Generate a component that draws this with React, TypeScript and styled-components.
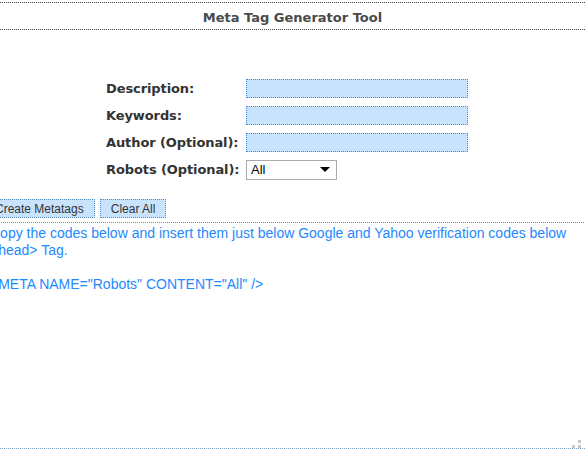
import { FC } from 'react'
import styled, { createGlobalStyle } from 'styled-components'

const GlobalStyle = createGlobalStyle`
  html, body {
    margin: 0;
    padding: 0;
    background: #fff;
    overflow: hidden;
  }
  body {
    font-family: 'DejaVu Sans', Verdana, sans-serif;
  }
`

const fields = ['Description:', 'Keywords:', 'Author (Optional):']

const App: FC = () => (
  <>
    <GlobalStyle />
    <Page>
      <Header>Meta Tag Generator Tool</Header>
      <Form>
        {fields.map((label) => (
          <Row key={label}>
            <Label>{label}</Label>
            <Input type="text" />
          </Row>
        ))}
        <Row>
          <Label>Robots (Optional):</Label>
          <Select>
            <span>All</span>
            <Caret />
          </Select>
        </Row>
      </Form>
      <Output>
        <Buttons>
          <Button>Create Metatags</Button>
          <Button>Clear All</Button>
        </Buttons>
        <Result>
          Copy the codes below and insert them just below Google and Yahoo verification codes below
          &lt;head&gt; Tag.
          <br />
          <br />
          &lt;META NAME="Robots" CONTENT="All" /&gt;
        </Result>
      </Output>
      <Grip>
        <Dot $x={6} $y={0} />
        <Dot $x={0} $y={5} />
        <Dot $x={6} $y={5} />
      </Grip>
    </Page>
  </>
)

export default App

const Page = styled.div`
  position: relative;
  width: 585px;
  height: 449px;
  padding-top: 2px;
  box-sizing: border-box;
  border-bottom: 1px dotted #7d9fc4;
  overflow: hidden;
`

const Header = styled.div`
  border-top: 1px dotted #444;
  border-bottom: 1px dotted #444;
  height: 26px;
  line-height: 29px;
  text-align: center;
  font-weight: bold;
  font-size: 13px;
  color: #4a4a4a;
`

const Form = styled.div`
  display: flex;
  flex-direction: column;
  gap: 8px;
  margin: 49px 0 0 106px;
`

const Row = styled.div`
  display: flex;
  align-items: center;
  height: 19px;
`

const Label = styled.div`
  width: 140px;
  font-weight: bold;
  font-size: 13px;
  letter-spacing: -0.1px;
  color: #333;
`

const Input = styled.input`
  width: 222px;
  height: 19px;
  box-sizing: border-box;
  border: 1px dotted #3b8de0;
  background: #c9e3fd;
  outline: none;
  padding: 0;
`

const Select = styled.div`
  width: 91px;
  height: 20px;
  box-sizing: border-box;
  border: 1px solid #ababab;
  display: flex;
  align-items: center;
  justify-content: space-between;
  padding: 0 6px 0 4px;
  font-family: 'Liberation Sans', Arial, sans-serif;
  font-size: 13px;
  color: #000;
`

const Caret = styled.span`
  width: 0;
  height: 0;
  border-left: 5px solid transparent;
  border-right: 5px solid transparent;
  border-top: 5px solid #000;
`

const Output = styled.div`
  margin: 20px 0 0 -10px;
`

const Buttons = styled.div`
  display: flex;
  gap: 5px;
  margin-left: -6px;
`

const Button = styled.button`
  height: 19px;
  padding: 0 10px;
  border: 1px dotted #5b8fc7;
  background: #c9e3fd;
  font-family: 'Liberation Sans', Arial, sans-serif;
  font-size: 12px;
  color: #333;
`

const Result = styled.div`
  margin-top: 4px;
  border-top: 1px dotted #5b8fc7;
  padding-top: 1.5px;
  width: 600px;
  font-family: 'Liberation Sans', Arial, sans-serif;
  font-size: 14px;
  line-height: 17px;
  color: #1e88ff;
`

const Grip = styled.div`
  position: absolute;
  right: 4px;
  bottom: 0px;
  width: 9px;
  height: 8px;
`

const Dot = styled.span<{ $x: number; $y: number }>`
  position: absolute;
  left: ${(p) => p.$x}px;
  top: ${(p) => p.$y}px;
  width: 3px;
  height: 3px;
  background: #c8c8c8;
`
